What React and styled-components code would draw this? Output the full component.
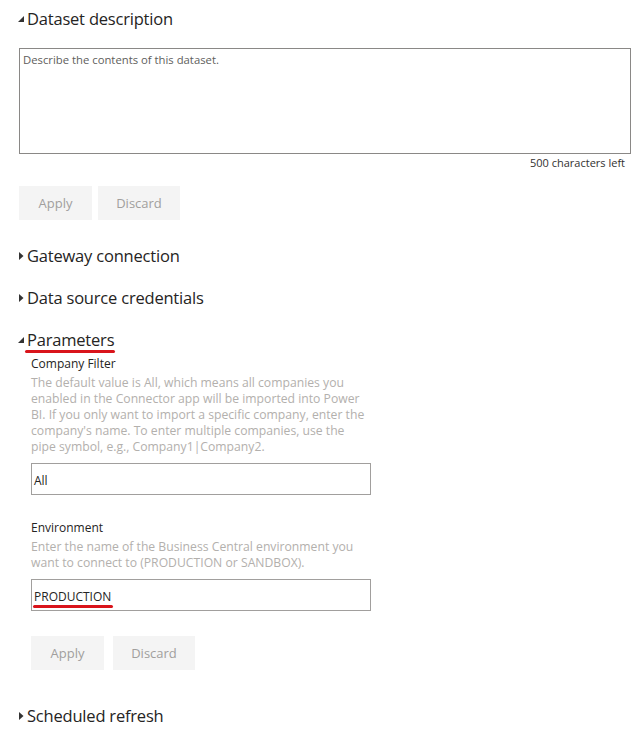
import React from "react";
import styled, { createGlobalStyle } from "styled-components";

const GlobalStyle = createGlobalStyle`
  body {
    margin: 0;
    background: #ffffff;
    font-family: "Open Sans", "Noto Sans", sans-serif;
    color: #252423;
  }
`;

function Caret({ open }) {
  return open ? (
    <CaretBox>
      <svg width="8" height="8" viewBox="0 0 8 8">
        <path d="M7 1 L7 7 L1 7 Z" fill="#333" />
      </svg>
    </CaretBox>
  ) : (
    <CaretBox>
      <svg width="8" height="10" viewBox="0 0 8 10">
        <path d="M2 1 L6.5 5 L2 9 Z" fill="#333" />
      </svg>
    </CaretBox>
  );
}

function Section({ title, open, marked, children }) {
  return (
    <SectionWrap>
      <Header>
        <Caret open={open} />
        <Title $marked={marked}>{title}</Title>
      </Header>
      {children}
    </SectionWrap>
  );
}

function Field({ label, help, value, marked }) {
  return (
    <FieldWrap>
      <FieldLabel>{label}</FieldLabel>
      <Help>{help}</Help>
      <Input>
        <InputValue $marked={marked}>{value}</InputValue>
      </Input>
    </FieldWrap>
  );
}

export default function App() {
  return (
    <Page>
      <GlobalStyle />
      <Section title="Dataset description" open>
        <DescBox>
          <Placeholder>Describe the contents of this dataset.</Placeholder>
        </DescBox>
        <Counter>500 characters left</Counter>
        <Buttons $bottom={22}>
          <Button $w={73}>Apply</Button>
          <Button $w={82}>Discard</Button>
        </Buttons>
      </Section>
      <Section title="Gateway connection" />
      <Section title="Data source credentials" />
      <Section title="Parameters" open marked>
        <Params>
          <Field
            label="Company Filter"
            help="The default value is All, which means all companies you enabled in the Connector app will be imported into Power BI. If you only want to import a specific company, enter the company's name. To enter multiple companies, use the pipe symbol, e.g., Company1|Company2."
            value="All"
          />
          <Field
            label="Environment"
            help="Enter the name of the Business Central environment you want to connect to (PRODUCTION or SANDBOX)."
            value="PRODUCTION"
            marked
          />
          <Buttons $gap={9} $top={24} $bottom={32}>
            <Button $w={73}>Apply</Button>
            <Button $w={82}>Discard</Button>
          </Buttons>
        </Params>
      </Section>
      <Section title="Scheduled refresh" />
    </Page>
  );
}

const Page = styled.div`
  width: 642px;
  height: 741px;
  overflow: hidden;
  padding: 5px 11px 0 17px;
  box-sizing: border-box;
`;

const SectionWrap = styled.div`
  margin-bottom: 16px;
`;

const Header = styled.div`
  display: flex;
  align-items: center;
  height: 26px;
`;

const CaretBox = styled.span`
  display: inline-flex;
  width: 10px;
  justify-content: flex-start;
  align-items: center;
  margin-top: 1px;
`;

const Title = styled.span`
  position: relative;
  font-size: 16.5px;
  color: #252423;
  letter-spacing: -0.2px;
  ${(p) =>
    p.$marked &&
    `
    &::after {
      content: "";
      position: absolute;
      left: -2px;
      right: -1px;
      bottom: -2px;
      height: 3px;
      border-radius: 2px;
      background: #d9141b;
    }
  `}
`;

const DescBox = styled.div`
  margin: 17px 0 0 2px;
  height: 106px;
  border: 1px solid #8a8886;
  box-sizing: border-box;
  padding: 3px 3px;
`;

const Placeholder = styled.div`
  font-size: 11.3px;
  color: #605e5c;
`;

const Counter = styled.div`
  text-align: right;
  font-size: 11px;
  color: #323130;
  padding-right: 6px;
  margin-top: 1px;
`;

const Buttons = styled.div`
  display: flex;
  gap: ${(p) => p.$gap || 6}px;
  margin-top: ${(p) => p.$top || 16}px;
  margin-left: ${(p) => (p.$gap ? 0 : 2)}px;
  margin-bottom: ${(p) => p.$bottom || 14}px;
`;

const Button = styled.div`
  width: ${(p) => p.$w}px;
  height: 34px;
  background: #f4f4f4;
  color: #a19f9d;
  font-size: 13px;
  display: flex;
  align-items: center;
  justify-content: center;
`;

const Params = styled.div`
  padding-left: 14px;
  margin-top: 4px;
`;

const FieldWrap = styled.div`
  margin-bottom: 25px;
`;

const FieldLabel = styled.div`
  font-size: 12px;
  color: #252423;
  line-height: 16px;
`;

const Help = styled.div`
  width: 341px;
  font-size: 12.2px;
  line-height: 16px;
  color: #b3b0ad;
  margin-top: 3px;
`;

const Input = styled.div`
  width: 340px;
  height: 32px;
  margin-top: 8px;
  border: 1px solid #a19f9d;
  box-sizing: border-box;
  display: flex;
  align-items: center;
  padding: 2px 2px 0;
`;

const InputValue = styled.span`
  position: relative;
  font-size: 12px;
  color: #252423;
  ${(p) =>
    p.$marked &&
    `
    &::after {
      content: "";
      position: absolute;
      left: -1px;
      right: -2px;
      bottom: -3px;
      height: 2.5px;
      border-radius: 2px;
      background: #d9141b;
    }
  `}
`;
